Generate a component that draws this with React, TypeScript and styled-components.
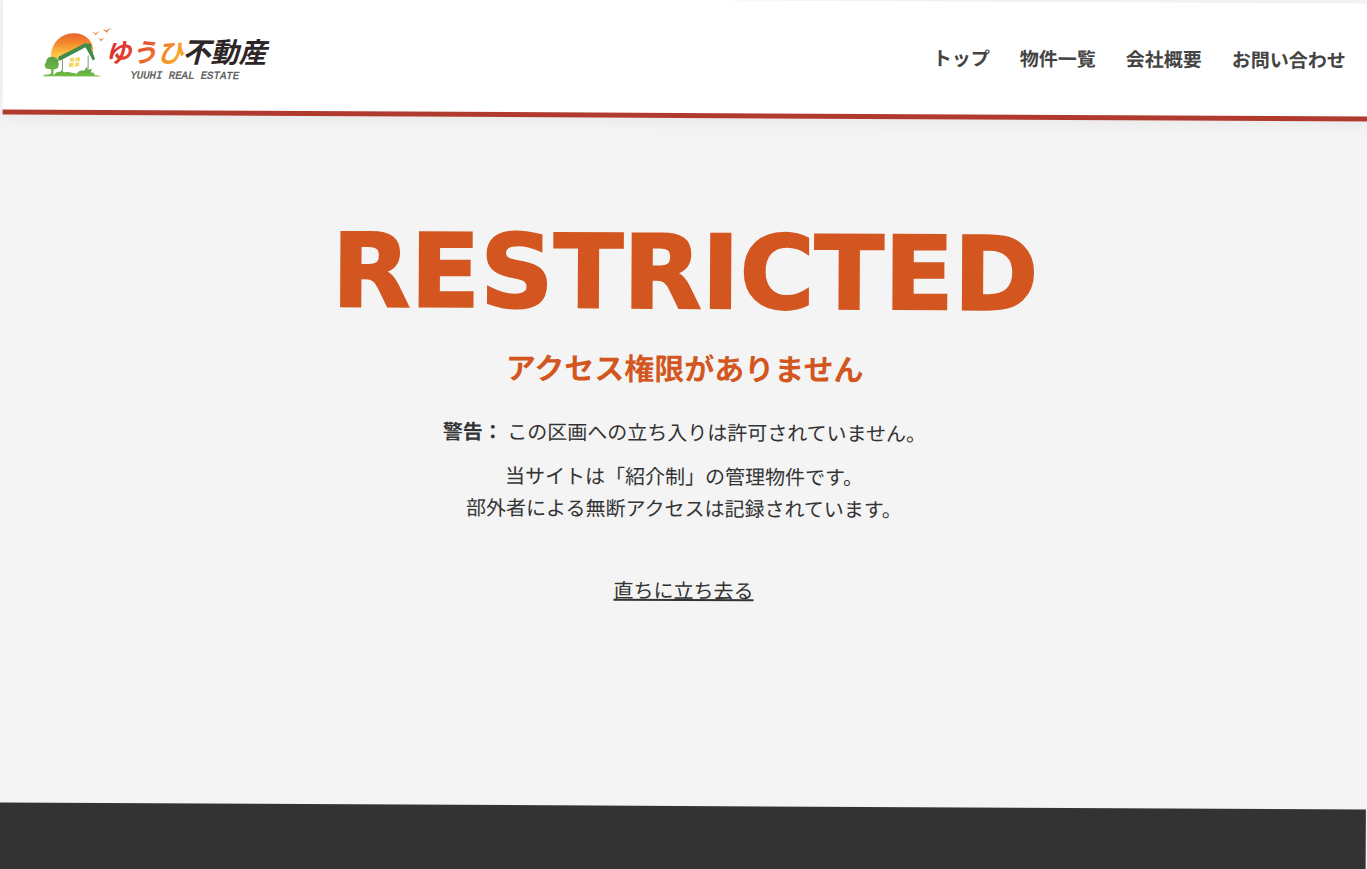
import React from "react";
import styled, { createGlobalStyle } from "styled-components";

const GlobalStyle = createGlobalStyle`
  *, *::before, *::after { box-sizing: border-box; }
  body {
    margin: 0;
    background: #f4f4f4;
    color: #333;
    font-family: "Noto Sans CJK JP", sans-serif;
    font-size: 20px;
    line-height: 32px;
  }
`;

const Viewport = styled.div`
  height: 100vh;
  overflow: hidden;
`;

/* The whole page hangs slightly crooked. */
const Sheet = styled.div`
  display: flex;
  flex-direction: column;
  min-height: calc(100vh + 16px);
  transform: rotate(0.3deg);
  transform-origin: 50% 600px;
`;

const Header = styled.header`
  display: flex;
  align-items: center;
  justify-content: space-between;
  padding: 26px 24px 27px 40px;
  background: #fff;
  border-bottom: 5px solid #b03a2e;
  box-shadow: 0 4px 15px rgba(0, 0, 0, 0.05);
`;

const LogoLink = styled.a`
  display: block;
  line-height: 0;
`;

const Nav = styled.nav`
  display: flex;
  gap: 30px;
`;

const NavLink = styled.a`
  color: #444;
  font-size: 19px;
  font-weight: 700;
  text-decoration: none;
`;

const Main = styled.main`
  display: flex;
  flex-direction: column;
  align-items: center;
  padding: 102px 20px 200px;
  text-align: center;
`;

const Title = styled.h1`
  margin: 0 0 18px;
  color: #d35620;
  font-family: "Arial Black", "DejaVu Sans", sans-serif;
  font-size: 102px;
  font-weight: 700;
  line-height: 105px;
  -webkit-text-stroke: 2px #d35620;
`;

const Subtitle = styled.h2`
  margin: 0 0 25px;
  color: #d35620;
  font-size: 30px;
  font-weight: 700;
  line-height: 48px;
`;

const Message = styled.p`
  margin: 0 0 12px;
`;

const LeaveLink = styled.a`
  margin-top: 38px;
  color: #333;
  text-decoration: underline;
`;

const Footer = styled.footer`
  flex: 1;
  min-height: 80px;
  background: #333;
`;

const Logo = () => (
  <svg width="232" height="60" viewBox="129 72 696 180" role="img" aria-label="ゆうひ不動産">
    <defs>
      <linearGradient id="sun" x1="0" y1="0" x2="0" y2="1">
        <stop offset="0" stopColor="#e8622c" />
        <stop offset="0.35" stopColor="#f58a2c" />
        <stop offset="0.75" stopColor="#fdc648" />
      </linearGradient>
      <linearGradient id="name" x1="0" y1="0" x2="1" y2="0.35">
        <stop offset="0" stopColor="#cf2038" />
        <stop offset="0.5" stopColor="#e5472c" />
        <stop offset="1" stopColor="#f7a52a" />
      </linearGradient>
      <linearGradient id="leaf" x1="0" y1="0" x2="0" y2="1">
        <stop offset="0" stopColor="#55a048" />
        <stop offset="1" stopColor="#74bd42" />
      </linearGradient>
    </defs>
    <path d="M154 184C148 140 178 103 222 103c30 0 52 17 57 42 3 18-1 34-5 45z" fill="url(#sun)" />
    <path d="M176 190l74-52 22 10 14 34-6 46H176z" fill="#fff" />
    <path d="M176 174l82-42 3 5 3-4 10 3v14l12 30-7 5-22-40-71 38-10 3z" fill="#3f8a4d" />
    <path d="M188 184v30M265 170v42" stroke="#7d9a80" strokeWidth="3" fill="none" />
    <path d="M210 178l13-2v12l-14 1zM227 176l14-1-1 12-13 1zM208 193l14-1-1 12-14 1zM226 192l13-1-1 11-13 1z" fill="#f1d96a" />
    <path d="M156 174c-12 0-17 9-17 17-8 7-4 19 6 20l9 1v17h7v-17c12 1 18-8 15-19 2-10-7-19-20-19z" fill="url(#leaf)" />
    <path d="M129 233c4-6 12-6 16-5 6-4 13-3 19 0 4-8 12-10 18-8l3-8 8 9c14-3 26 2 38 4 6-10 15-12 22-9l9-12 2 10 12-5-3 12c12-1 12 6 12 8 8-1 14 1 17 4z" fill="url(#leaf)" />
    <g fill="#ee7b35">
      <path d="M277 101c5-1 9 0 11 3 3-4 7-6 12-6-6 2-9 6-12 12-2-5-6-8-11-9z" />
      <path d="M308 93c5-2 10 0 12 2 4-5 9-8 16-8-8 3-12 8-15 15-3-5-7-8-13-9z" />
      <path d="M294 119c4-1 7 0 9 3 3-3 6-4 11-4-5 2-8 5-11 10-2-5-5-8-9-9z" />
    </g>
    <g fontFamily="'Noto Sans CJK JP', sans-serif" fontWeight="700" fontStyle="italic">
      <text x="316" y="189" fontSize="78" fill="url(#name)">ゆうひ</text>
      <text x="548" y="189" fontSize="84" fill="#2d2526">不動産</text>
    </g>
    <text x="392" y="238" fontFamily="'Liberation Mono', monospace" fontSize="32" fontStyle="italic" fill="#555" stroke="#555">
      YUUHI REAL ESTATE
    </text>
  </svg>
);

const links = ["トップ", "物件一覧", "会社概要", "お問い合わせ"];

export default function App() {
  return (
    <Viewport>
      <GlobalStyle />
      <Sheet>
        <Header>
          <LogoLink href="#">
            <Logo />
          </LogoLink>
          <Nav>
            {links.map((label) => (
              <NavLink key={label} href="#">{label}</NavLink>
            ))}
          </Nav>
        </Header>
        <Main>
          <Title>RESTRICTED</Title>
          <Subtitle>アクセス権限がありません</Subtitle>
          <Message>
            <strong>警告：</strong> この区画への立ち入りは許可されていません。
          </Message>
          <Message>
            当サイトは「紹介制」の管理物件です。
            <br />
            部外者による無断アクセスは記録されています。
          </Message>
          <LeaveLink href="#">直ちに立ち去る</LeaveLink>
        </Main>
        <Footer />
      </Sheet>
    </Viewport>
  );
}
